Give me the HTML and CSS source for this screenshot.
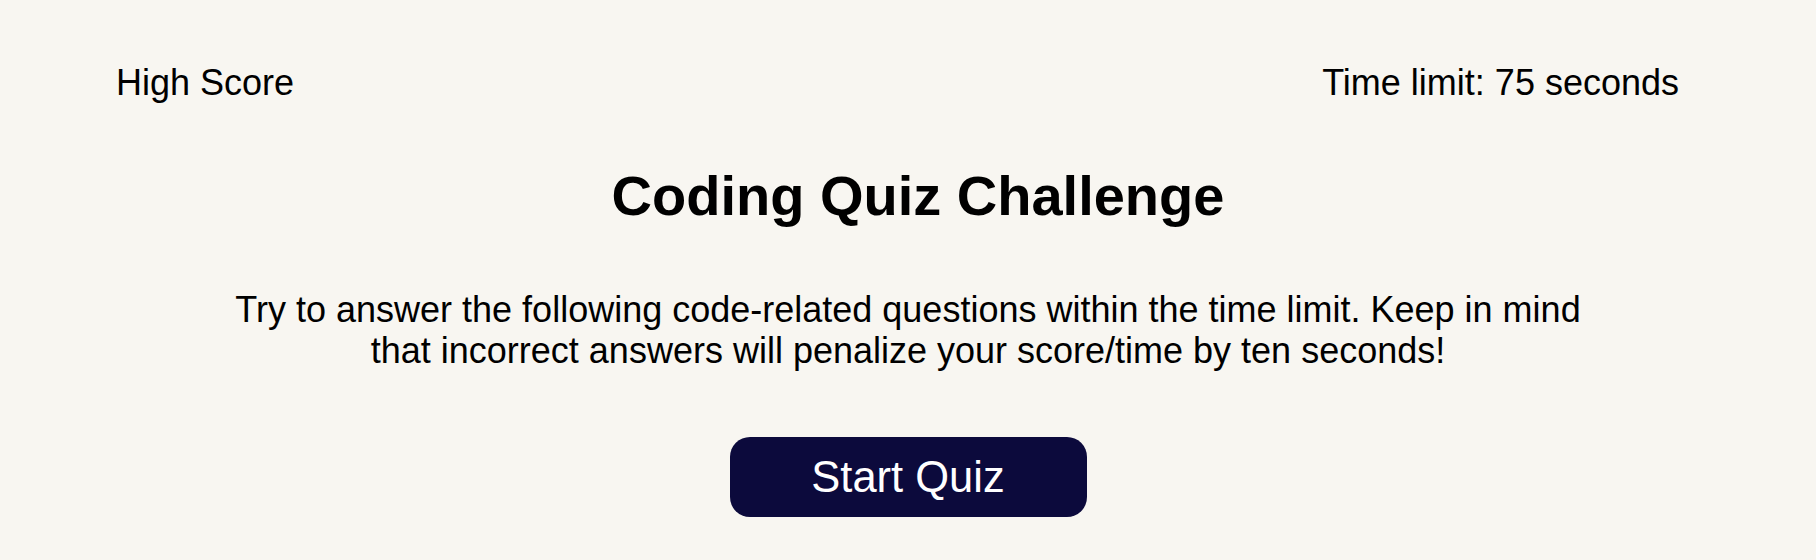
FILE: index.html
```html
<!DOCTYPE html>
<html lang="en">
<head>
<meta charset="utf-8">
<title>Coding Quiz Challenge</title>
<link rel="stylesheet" href="styles.css">
</head>
<body>
<header class="topbar">
  <a class="highscore">High Score</a>
  <div class="timer">Time limit: 75 seconds</div>
</header>
<main class="intro">
  <h1 class="title">Coding Quiz Challenge</h1>
  <p class="desc">Try to answer the following code-related questions within the time limit. Keep in mind that incorrect answers will penalize your score/time by ten seconds!</p>
  <button class="start">Start Quiz</button>
</main>
</body>
</html>
```

FILE: styles.css
```css
html, body {
  margin: 0;
  padding: 0;
}
body {
  background: #f8f6f1;
  color: #000;
  font-family: "Liberation Sans", Arial, sans-serif;
}
.topbar {
  display: flex;
  justify-content: space-between;
  padding: 62px 137px 0 116px;
  font-size: 36px;
  line-height: 41px;
}
.highscore {
  color: #000;
  text-decoration: none;
}
.intro {
  display: flex;
  flex-direction: column;
  align-items: center;
  text-align: center;
}
.title {
  margin: 61px 0 0;
  padding-left: 20px;
  font-size: 56px;
  line-height: 63px;
  font-weight: bold;
}
.desc {
  margin: 62px 0 0;
  max-width: 1390px;
  font-size: 36px;
  line-height: 41px;
}
.start {
  margin-top: 66px;
  width: 357px;
  height: 80px;
  border: none;
  border-radius: 20px;
  background: #0c0a3c;
  color: #fff;
  font-family: "Liberation Sans", Arial, sans-serif;
  font-size: 43.5px;
  padding: 0;
  display: flex;
  align-items: center;
  justify-content: center;
}
```
